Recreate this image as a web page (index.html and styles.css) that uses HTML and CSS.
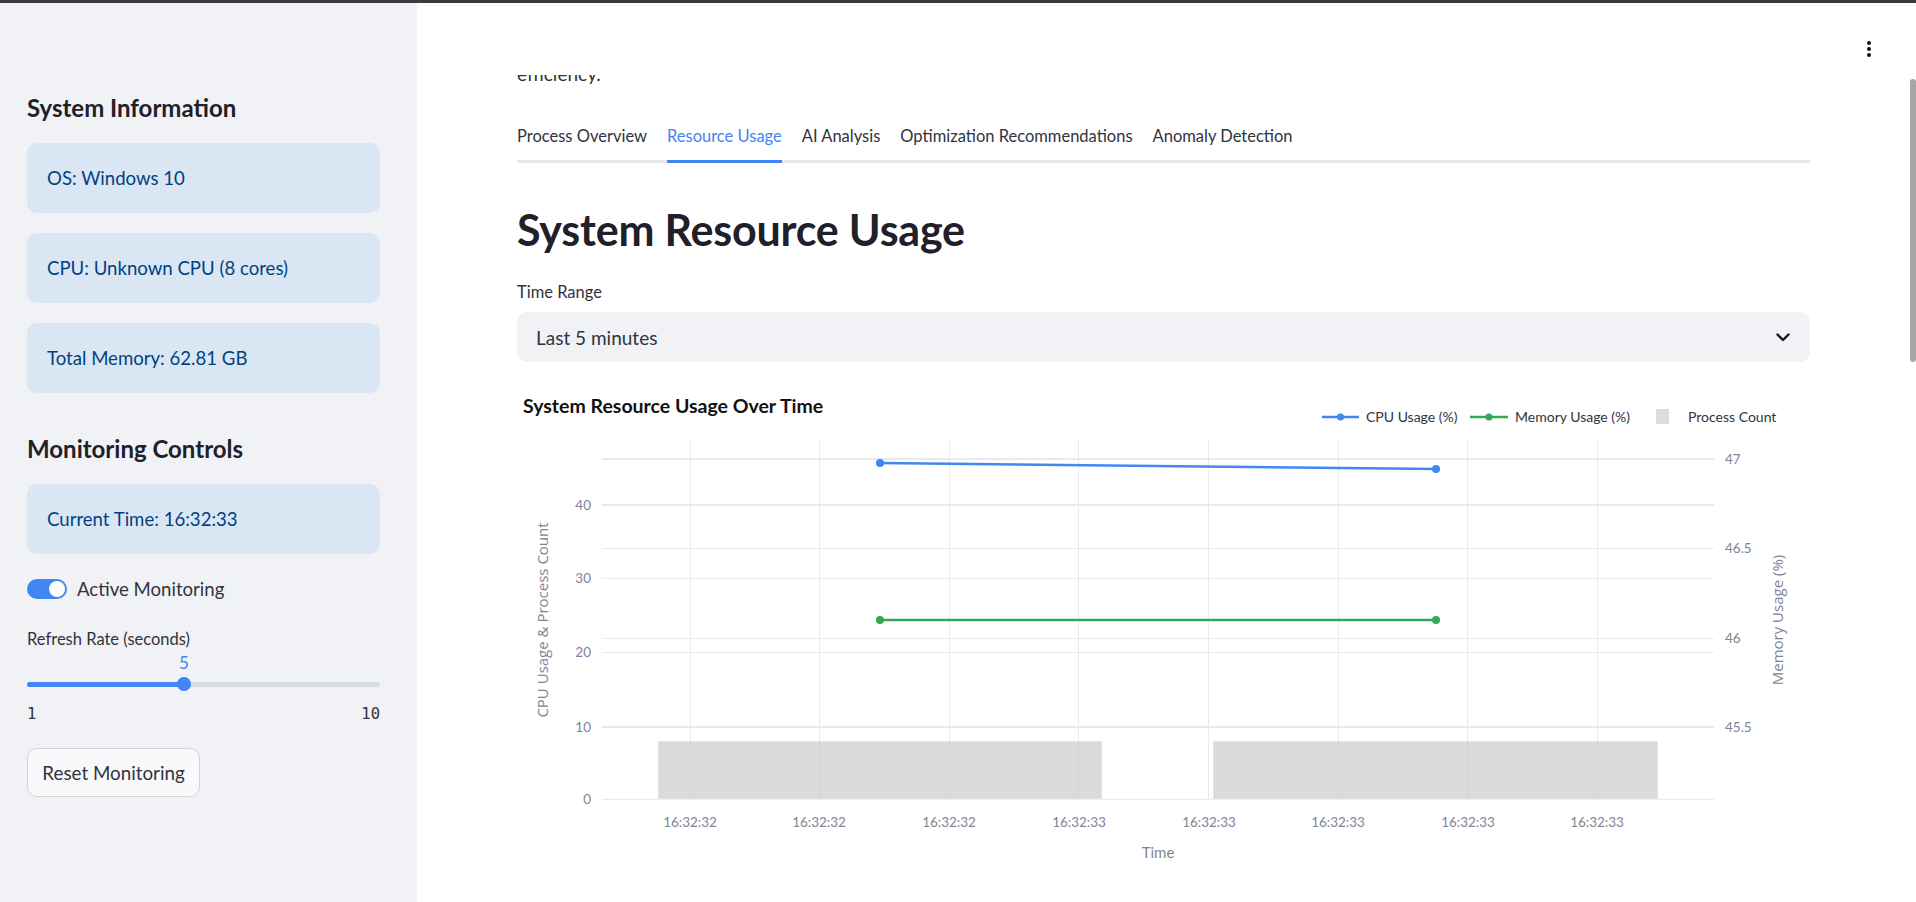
FILE: index.html
```html
<!DOCTYPE html>
<html lang="en">
<head>
<meta charset="utf-8">
<title>Process Monitor</title>
<link rel="stylesheet" href="styles.css">
</head>
<body>
<div class="topbar"></div>
<div class="app">
  <aside class="sidebar">
    <h2 class="side-h side-h-first">System Information</h2>
    <div class="info info-first">OS: Windows 10</div>
    <div class="info">CPU: Unknown CPU (8 cores)</div>
    <div class="info">Total Memory: 62.81 GB</div>
    <h2 class="side-h side-h-second">Monitoring Controls</h2>
    <div class="info info-first">Current Time: 16:32:33</div>
    <div class="toggle-row">
      <span class="toggle"><span class="knob"></span></span>
      <span class="toggle-label">Active Monitoring</span>
    </div>
    <div class="slider-label">Refresh Rate (seconds)</div>
    <div class="slider-value-row"><span class="slider-value" style="left:44.44%">5</span></div>
    <div class="track">
      <div class="track-fill" style="width:44.44%"></div>
      <div class="thumb" style="left:44.44%"></div>
    </div>
    <div class="ticks"><span>1</span><span>10</span></div>
    <button class="btn">Reset Monitoring</button>
  </aside>
  <main class="main">
    <header class="header">
      <svg class="kebab" width="4" height="16" viewBox="0 0 4 16"><circle cx="2" cy="2" r="2"/><circle cx="2" cy="8" r="2"/><circle cx="2" cy="14" r="2"/></svg>
    </header>
    <div class="scrollthumb"></div>
    <div class="content">
      <p class="intro">Monitor running processes, analyze resource usage with AI, and get recommendations to improve system<br>efficiency.</p>
      <nav class="tabs">
        <span class="tab">Process Overview</span>
        <span class="tab tab-active">Resource Usage</span>
        <span class="tab">AI Analysis</span>
        <span class="tab">Optimization Recommendations</span>
        <span class="tab">Anomaly Detection</span>
      </nav>
      <h1 class="page-title">System Resource Usage</h1>
      <div class="field-label">Time Range</div>
      <div class="select">
        <span>Last 5 minutes</span>
        <svg class="chevron" width="14" height="9" viewBox="0 0 14 9"><path d="M1.5 1.5 L7 7 L12.5 1.5" fill="none" stroke="#111" stroke-width="2.4" stroke-linecap="round" stroke-linejoin="round"/></svg>
      </div>
      <svg class="chart" width="1293" height="485" viewBox="0 0 1293 485">
        <text class="c-title" x="6" y="28">System Resource Usage Over Time</text>
        <!-- legend -->
        <line x1="805" y1="32" x2="842" y2="32" stroke="#4285f4" stroke-width="2.5"/>
        <circle cx="823.5" cy="32" r="3.6" fill="#4285f4"/>
        <text class="c-legend" x="849" y="37">CPU Usage (%)</text>
        <line x1="953" y1="32" x2="991" y2="32" stroke="#34a853" stroke-width="2.5"/>
        <circle cx="972" cy="32" r="3.6" fill="#34a853"/>
        <text class="c-legend" x="998" y="37">Memory Usage (%)</text>
        <rect x="1139" y="24" width="13" height="15" fill="#dcdcdc"/>
        <text class="c-legend" x="1171" y="37">Process Count</text>
        <!-- horizontal grid -->
        <g stroke="#e6eaf1" stroke-width="1">
          <line x1="85" y1="74" x2="1197" y2="74" stroke-width="2"/>
          <line x1="85" y1="120" x2="1197" y2="120" stroke-width="2"/>
          <line x1="85" y1="163.5" x2="1197" y2="163.5"/>
          <line x1="85" y1="193.5" x2="1197" y2="193.5"/>
          <line x1="85" y1="253.5" x2="1197" y2="253.5"/>
          <line x1="85" y1="267.5" x2="1197" y2="267.5"/>
          <line x1="85" y1="342" x2="1197" y2="342" stroke-width="2.5"/>
        </g>
        <!-- vertical grid -->
        <g stroke="#e6eaf1" stroke-width="1">
          <line x1="173.5" y1="56" x2="173.5" y2="414"/>
          <line x1="302.5" y1="56" x2="302.5" y2="414"/>
          <line x1="432.5" y1="56" x2="432.5" y2="414"/>
          <line x1="561.5" y1="56" x2="561.5" y2="414"/>
          <line x1="691.5" y1="56" x2="691.5" y2="414"/>
          <line x1="821.5" y1="56" x2="821.5" y2="414"/>
          <line x1="950.5" y1="56" x2="950.5" y2="414"/>
          <line x1="1080.5" y1="56" x2="1080.5" y2="414"/>
        </g>
        <line x1="85" y1="414.5" x2="1197" y2="414.5" stroke="#e6eaf1" stroke-width="1.5"/>
        <!-- bars -->
        <rect x="141" y="356" width="444" height="58" fill="#c8c8c8" fill-opacity="0.65" stroke="#ffffff" stroke-opacity="0.4" stroke-width="1"/>
        <rect x="696" y="356" width="445" height="58" fill="#c8c8c8" fill-opacity="0.65" stroke="#ffffff" stroke-opacity="0.4" stroke-width="1"/>
        <!-- lines -->
        <line x1="363" y1="78" x2="919" y2="84" stroke="#4285f4" stroke-width="2.5"/>
        <circle cx="363" cy="78" r="4" fill="#4285f4"/>
        <circle cx="919" cy="84" r="4" fill="#4285f4"/>
        <line x1="363" y1="235" x2="919" y2="235" stroke="#34a853" stroke-width="2.5"/>
        <circle cx="363" cy="235" r="4" fill="#34a853"/>
        <circle cx="919" cy="235" r="4" fill="#34a853"/>
        <!-- left ticks -->
        <g class="c-tick" text-anchor="end">
          <text x="74" y="125">40</text>
          <text x="74" y="198">30</text>
          <text x="74" y="272">20</text>
          <text x="74" y="347">10</text>
          <text x="74" y="419">0</text>
        </g>
        <!-- right ticks -->
        <g class="c-tick" text-anchor="start">
          <text x="1208" y="79">47</text>
          <text x="1208" y="168">46.5</text>
          <text x="1208" y="258">46</text>
          <text x="1208" y="347">45.5</text>
        </g>
        <!-- x ticks -->
        <g class="c-tick" text-anchor="middle">
          <text x="173" y="442">16:32:32</text>
          <text x="302" y="442">16:32:32</text>
          <text x="432" y="442">16:32:32</text>
          <text x="562" y="442">16:32:33</text>
          <text x="692" y="442">16:32:33</text>
          <text x="821" y="442">16:32:33</text>
          <text x="951" y="442">16:32:33</text>
          <text x="1080" y="442">16:32:33</text>
        </g>
        <text class="c-axis" x="641" y="473" text-anchor="middle">Time</text>
        <text class="c-axis c-axis-rot" transform="translate(31 235) rotate(-90)" text-anchor="middle">CPU Usage &amp; Process Count</text>
        <text class="c-axis c-axis-rot" transform="translate(1266 235) rotate(-90)" text-anchor="middle">Memory Usage (%)</text>
      </svg>
    </div>
  </main>
</div>
</body>
</html>
```

FILE: styles.css
```css
* { box-sizing: border-box; }

html, body {
  margin: 0;
  padding: 0;
}

body {
  width: 1916px;
  height: 902px;
  overflow: hidden;
  font-family: "Source Sans Pro", "Lato", "Noto Sans", sans-serif;
  color: #31333f;
  background: #ffffff;
}

.topbar {
  height: 3px;
  background: #3b3b3b;
}

.app {
  display: flex;
  height: 899px;
}

/* ---------- Sidebar ---------- */
.sidebar {
  width: 417px;
  flex: 0 0 417px;
  background: #f0f2f6;
  padding: 0 37px 0 27px;
  display: flex;
  flex-direction: column;
  align-items: stretch;
}

.side-h {
  margin: 0;
  font-size: 24px;
  line-height: 30px;
  font-weight: 700;
  color: #1f2029;
}
.side-h-first { margin-top: 90px; }
.side-h-second { margin-top: 41px; }

.info {
  height: 70px;
  margin-top: 20px;
  padding: 0 20px;
  display: flex;
  align-items: center;
  background: #dbe6f4;
  border-radius: 10px;
  color: #004280;
  font-size: 18.6px;
}
.info-first { margin-top: 20px; }

.toggle-row {
  margin-top: 25px;
  height: 20px;
  display: flex;
  align-items: center;
  gap: 10px;
  font-size: 18.6px;
  color: #31333f;
}
.toggle {
  width: 40px;
  height: 20px;
  border-radius: 10px;
  background: #4285f4;
  position: relative;
  flex: 0 0 40px;
}
.knob {
  position: absolute;
  top: 2px;
  right: 2px;
  width: 16px;
  height: 16px;
  border-radius: 50%;
  background: #ffffff;
}

.slider-label {
  margin-top: 28px;
  font-size: 16.5px;
  line-height: 24px;
  color: #31333f;
}
.slider-value-row {
  margin-top: 2px;
  height: 20px;
  position: relative;
}
.slider-value {
  position: absolute;
  top: 0;
  transform: translateX(-50%);
  font-size: 17px;
  line-height: 20px;
  color: #4285f4;
}
.track {
  margin-top: 4px;
  height: 14px;
  position: relative;
}
.track::before {
  content: "";
  position: absolute;
  left: 0;
  right: 0;
  top: 5px;
  height: 5px;
  border-radius: 3px;
  background: #d9dde6;
}
.track-fill {
  position: absolute;
  left: 0;
  top: 5px;
  height: 5px;
  border-radius: 3px;
  background: #4285f4;
}
.thumb {
  position: absolute;
  top: 0;
  width: 14px;
  height: 14px;
  margin-left: -7px;
  border-radius: 50%;
  background: #4285f4;
}
.ticks {
  margin-top: 13px;
  height: 20px;
  display: flex;
  justify-content: space-between;
  font-family: "DejaVu Sans Mono", "Liberation Mono", monospace;
  font-size: 15.5px;
  line-height: 20px;
  color: #31333f;
}

.btn {
  margin-top: 24px;
  width: 173px;
  height: 49px;
  align-self: flex-start;
  background: #f9f9fb;
  border: 1px solid #d3d4d8;
  border-radius: 10px;
  font-family: inherit;
  font-size: 18.8px;
  color: #31333f;
  padding: 0;
}

/* ---------- Main ---------- */
.main {
  flex: 1;
  position: relative;
  overflow: hidden;
  background: #ffffff;
}

.header {
  position: absolute;
  top: 0;
  left: 0;
  right: 0;
  height: 72px;
  background: #ffffff;
  z-index: 2;
}
.kebab {
  position: absolute;
  left: 1450px;
  top: 38px;
  fill: #111111;
}

.scrollthumb {
  position: absolute;
  right: 0;
  top: 76px;
  width: 6px;
  height: 283px;
  border-radius: 3px;
  background: #a6a6a6;
  z-index: 3;
}

.content {
  padding: 23px 106px 0 100px;
}

.intro {
  margin: 0;
  font-size: 19px;
  line-height: 32px;
  color: #31333f;
}

.tabs {
  margin-top: 20px;
  display: flex;
  gap: 20px;
  border-bottom: 3px solid #e8e8eb;
}
.tab {
  height: 53px;
  margin-bottom: -3px;
  display: flex;
  align-items: center;
  padding-top: 2px;
  padding-bottom: 1px;
  border-bottom: 3px solid transparent;
  font-size: 16.5px;
  color: #31333f;
  white-space: nowrap;
}
.tab-active {
  color: #4285f4;
  border-bottom-color: #4285f4;
}

.page-title {
  margin: 40px 0 0 0;
  font-size: 43px;
  line-height: 54px;
  font-weight: 700;
  color: #1f2029;
  letter-spacing: -0.2px;
}

.field-label {
  margin-top: 21px;
  font-size: 16.5px;
  line-height: 28px;
  color: #31333f;
}

.select {
  margin-top: 6px;
  height: 50px;
  background: #f0f2f6;
  border-radius: 10px;
  display: flex;
  align-items: center;
  justify-content: space-between;
  padding: 0 20px 0 19px;
  font-size: 19px;
  color: #31333f;
}

.chart {
  display: block;
  margin-top: 23px;
}

.c-title {
  font-family: "Lato", sans-serif;
  font-size: 19.5px;
  font-weight: 700;
  fill: #111111;
}
.c-legend {
  font-family: "Lato", sans-serif;
  font-size: 14px;
  fill: #31333f;
}
.c-tick {
  font-family: "Lato", sans-serif;
  font-size: 13.5px;
  fill: #808495;
}
.c-axis {
  font-family: "Lato", sans-serif;
  font-size: 15px;
  fill: #808495;
}
.c-axis-rot {
  font-family: "Open Sans", sans-serif;
  font-size: 15px;
}
```
